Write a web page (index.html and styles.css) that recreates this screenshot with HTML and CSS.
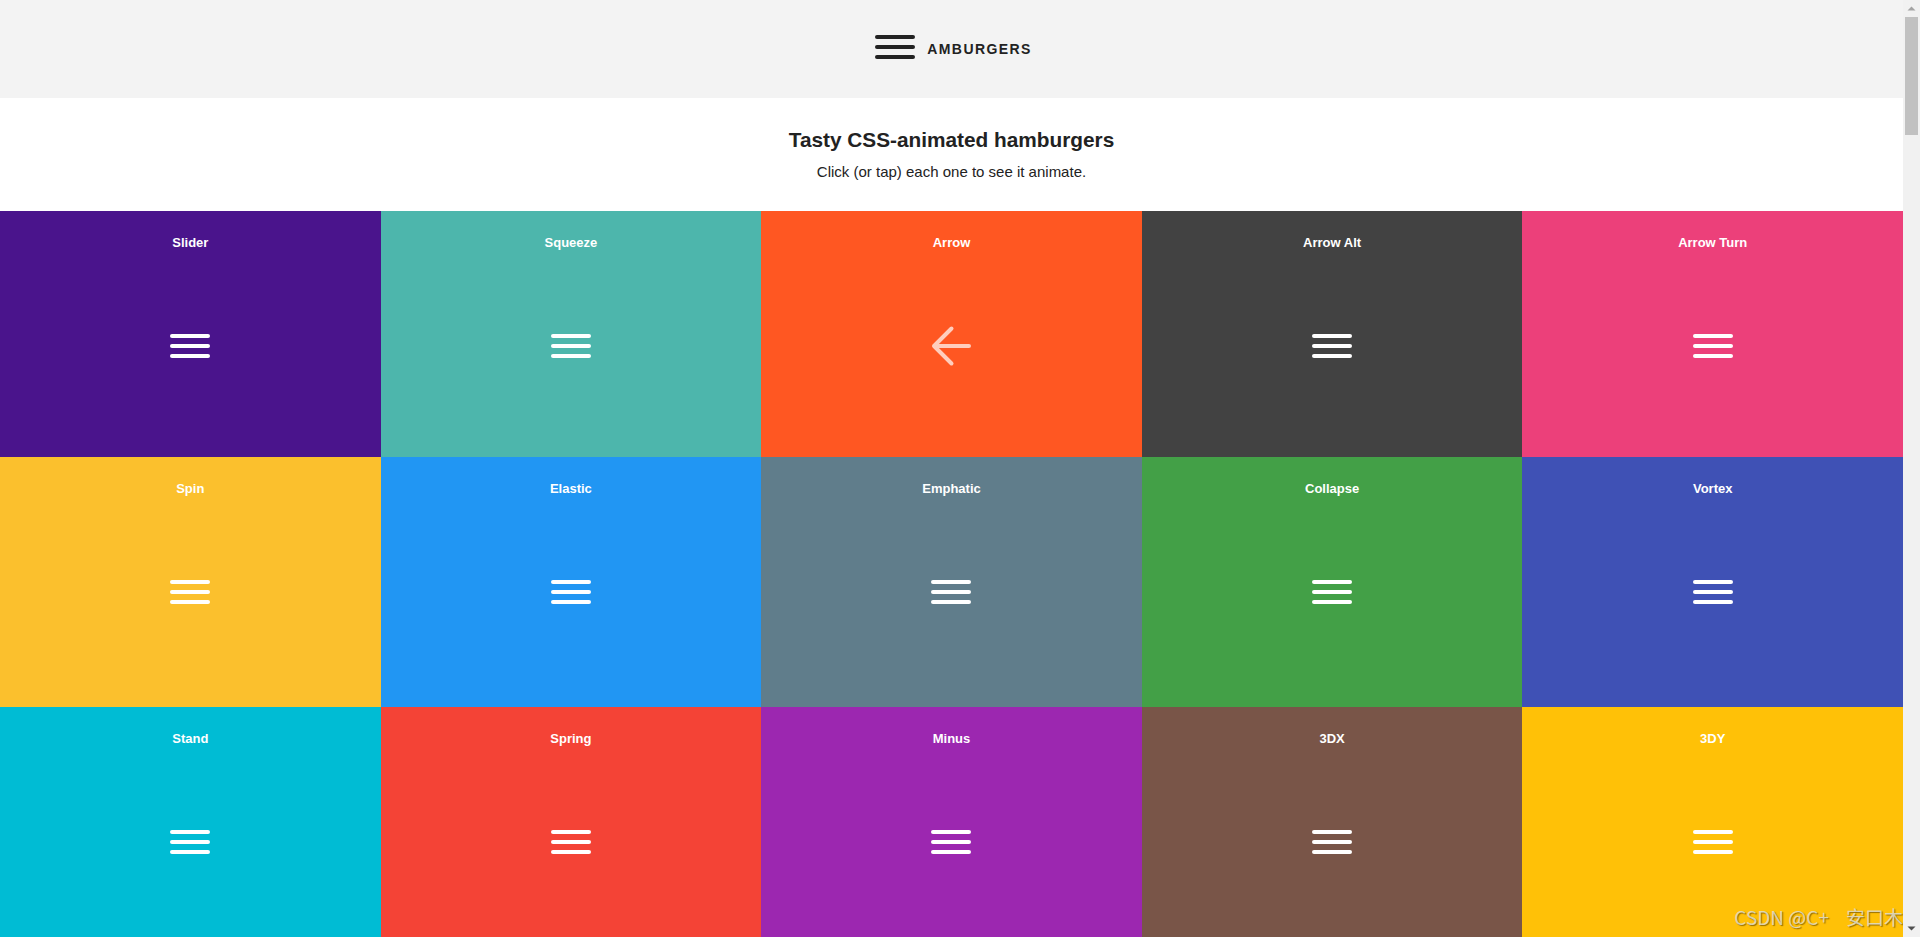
FILE: index.html
```html
<!DOCTYPE html>
<html lang="en">
<head>
<meta charset="utf-8">
<title>Hamburgers</title>
<link rel="stylesheet" href="styles.css">
</head>
<body>
<div class="app">
  <div class="page">
    <header class="topbar">
      <div class="logo">
        <span class="burger burger-dark"><span></span><span></span><span></span></span>
        <span class="logo-text">AMBURGERS</span>
      </div>
    </header>
    <section class="intro">
      <h1 class="intro-title">Tasty CSS-animated hamburgers</h1>
      <p class="intro-sub">Click (or tap) each one to see it animate.</p>
    </section>
    <main class="grid">
      <div class="tile c-slider"><h2 class="tile-title">Slider</h2><span class="burger"><span></span><span></span><span></span></span></div>
      <div class="tile c-squeeze"><h2 class="tile-title">Squeeze</h2><span class="burger"><span></span><span></span><span></span></span></div>
      <div class="tile c-arrow"><h2 class="tile-title">Arrow</h2>
        <svg class="arrow-icon" width="40" height="24" viewBox="0 0 40 24">
          <g opacity="0.7" stroke="#fff" stroke-width="4" stroke-linecap="round" fill="none">
            <path d="M3 12 H38 M3 12 L20.5 -5.5 M3 12 L20.5 29.5"/>
          </g>
        </svg>
      </div>
      <div class="tile c-arrowalt"><h2 class="tile-title">Arrow Alt</h2><span class="burger"><span></span><span></span><span></span></span></div>
      <div class="tile c-arrowturn"><h2 class="tile-title">Arrow Turn</h2><span class="burger"><span></span><span></span><span></span></span></div>

      <div class="tile c-spin"><h2 class="tile-title">Spin</h2><span class="burger"><span></span><span></span><span></span></span></div>
      <div class="tile c-elastic"><h2 class="tile-title">Elastic</h2><span class="burger"><span></span><span></span><span></span></span></div>
      <div class="tile c-emphatic"><h2 class="tile-title">Emphatic</h2><span class="burger"><span></span><span></span><span></span></span></div>
      <div class="tile c-collapse"><h2 class="tile-title">Collapse</h2><span class="burger"><span></span><span></span><span></span></span></div>
      <div class="tile c-vortex"><h2 class="tile-title">Vortex</h2><span class="burger"><span></span><span></span><span></span></span></div>

      <div class="tile c-stand"><h2 class="tile-title">Stand</h2><span class="burger"><span></span><span></span><span></span></span></div>
      <div class="tile c-spring"><h2 class="tile-title">Spring</h2><span class="burger"><span></span><span></span><span></span></span></div>
      <div class="tile c-minus"><h2 class="tile-title">Minus</h2><span class="burger"><span></span><span></span><span></span></span></div>
      <div class="tile c-3dx"><h2 class="tile-title">3DX</h2><span class="burger"><span></span><span></span><span></span></span></div>
      <div class="tile c-3dy"><h2 class="tile-title">3DY</h2><span class="burger"><span></span><span></span><span></span></span></div>
    </main>
    <div class="watermark">CSDN @C+&nbsp;&nbsp;&nbsp;&nbsp;安口木</div>
  </div>
  <div class="scrollbar">
    <div class="sb-btn">
      <svg width="17" height="17" viewBox="0 0 17 17"><path d="M4.5 10.5 L8.5 6.5 L12.5 10.5 Z" fill="#a3a3a3"/></svg>
    </div>
    <div class="sb-track">
      <div class="sb-thumb"></div>
    </div>
    <div class="sb-btn">
      <svg width="17" height="17" viewBox="0 0 17 17"><path d="M4.5 6.5 L12.5 6.5 L8.5 10.5 Z" fill="#505050"/></svg>
    </div>
  </div>
</div>
</body>
</html>
```

FILE: styles.css
```css
* { box-sizing: border-box; }

html, body {
  margin: 0;
  padding: 0;
  height: 100%;
  overflow: hidden;
  background: #fff;
  font-family: "Liberation Sans", Arial, sans-serif;
  color: #222;
}

.app {
  display: flex;
  height: 100vh;
}

.page {
  flex: 1 1 auto;
  min-width: 0;
  overflow: hidden;
  position: relative;
}

/* Top bar */
.topbar {
  height: 98px;
  background: #f3f3f3;
  display: flex;
  align-items: center;
  justify-content: center;
}

.logo {
  display: flex;
  align-items: center;
  gap: 12px;
  margin-left: 4px;
}

.logo .burger {
  margin-bottom: 5px;
}

.logo-text {
  font-size: 14px;
  font-weight: bold;
  letter-spacing: 0.1em;
  line-height: 16px;
  color: #222;
}

/* Burger icon */
.burger {
  display: flex;
  flex-direction: column;
  gap: 6px;
  width: 40px;
}

.burger > span {
  display: block;
  height: 4px;
  border-radius: 4px;
  background: #fff;
}

.burger-dark > span {
  background: #222;
}

/* Intro */
.intro {
  padding: 30px 0 31px;
  text-align: center;
}

.intro-title {
  margin: 0 0 11px;
  font-size: 20.8px;
  line-height: 24px;
  font-weight: bold;
  color: #222;
}

.intro-sub {
  margin: 0;
  font-size: 15px;
  line-height: 17px;
  color: #222;
}

/* Grid */
.grid {
  display: grid;
  grid-template-columns: repeat(5, 1fr);
  grid-template-rows: 246px 250px 250px;
}

.tile {
  display: flex;
  flex-direction: column;
  align-items: center;
  padding-top: 24px;
  color: #fff;
}

.tile-title {
  margin: 0;
  font-size: 13px;
  line-height: 16px;
  font-weight: bold;
  color: #fff;
}

.tile .burger,
.tile .arrow-icon {
  margin-top: 83px;
}

.arrow-icon {
  display: block;
  overflow: visible;
}

.c-slider { background: #4a148c; }
.c-squeeze { background: #4db6ac; }
.c-arrow { background: #ff5722; }
.c-arrowalt { background: #424242; }
.c-arrowturn { background: #ec407a; }
.c-spin { background: #fbc02d; }
.c-elastic { background: #2196f3; }
.c-emphatic { background: #607d8b; }
.c-collapse { background: #43a047; }
.c-vortex { background: #3f51b5; }
.c-stand { background: #00bcd4; }
.c-spring { background: #f44336; }
.c-minus { background: #9c27b0; }
.c-3dx { background: #795548; }
.c-3dy { background: #ffc107; }

/* Watermark overlay */
.watermark {
  position: absolute;
  right: 0;
  bottom: 8px;
  font-family: "Noto Sans CJK SC", "Liberation Sans", sans-serif;
  font-size: 19px;
  line-height: 24px;
  white-space: nowrap;
  color: rgba(225, 222, 205, 0.85);
  text-shadow: 1px 1px 1px rgba(60, 40, 0, 0.55);
}

/* Fake scrollbar */
.scrollbar {
  flex: 0 0 17px;
  width: 17px;
  background: #f1f1f1;
  display: flex;
  flex-direction: column;
}

.sb-btn {
  height: 17px;
  flex: 0 0 17px;
}

.sb-btn svg {
  display: block;
}

.sb-track {
  flex: 1 1 auto;
  padding: 0 2px;
}

.sb-thumb {
  height: 118px;
  margin-top: 0;
  background: #c1c1c1;
}
```
